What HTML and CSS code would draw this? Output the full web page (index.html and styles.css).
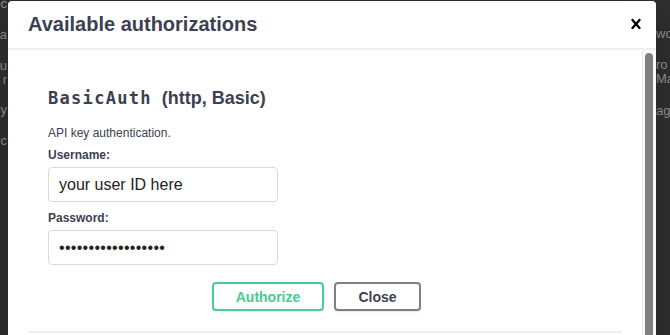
FILE: index.html
```html
<!DOCTYPE html>
<html lang="en">
<head>
<meta charset="utf-8">
<title>Available authorizations</title>
<link rel="stylesheet" href="styles.css">
</head>
<body>
<div class="backdrop">
  <div class="bg-col bg-left">
    <div class="bg-line l1">oc</div>
    <div class="bg-line l2">a</div>
    <div class="bg-line l3">u</div>
    <div class="bg-line">r</div>
    <div class="bg-line l5">y</div>
    <div class="bg-line l6">c</div>
  </div>
  <div class="bg-col bg-right">
    <div class="bg-line r1">wo</div>
    <div class="bg-line r2">ro</div>
    <div class="bg-line">Ma</div>
    <div class="bg-line r4">ag</div>
  </div>
</div>

<div class="modal">
  <div class="modal-header">
    <h3 class="modal-title">Available authorizations</h3>
    <button class="close-modal" type="button" aria-label="Close">
      <svg width="20" height="20" viewBox="0 0 20 20" aria-hidden="true"><path d="M14.348 14.849c-.469.469-1.229.469-1.697 0L10 11.819l-2.651 3.029c-.469.469-1.229.469-1.697 0-.469-.469-.469-1.229 0-1.697l2.758-3.15-2.759-3.152c-.469-.469-.469-1.228 0-1.697.469-.469 1.228-.469 1.697 0L10 8.183l2.651-3.031c.469-.469 1.228-.469 1.697 0 .469.469.469 1.229 0 1.697l-2.758 3.152 2.758 3.15c.469.469.469 1.229 0 1.698z"/></svg>
    </button>
  </div>
  <div class="modal-body">
    <div class="modal-content">
      <div class="auth-container">
        <h4 class="auth-title"><code class="scheme">BasicAuth</code><span class="scheme-type">(http, Basic)</span></h4>
        <p class="desc">API key authentication.</p>
        <label class="field-label" for="user">Username:</label>
        <input class="field" id="user" type="text" value="your user ID here">
        <label class="field-label" for="pass">Password:</label>
        <input class="field field-last field-secret" id="pass" type="password" value="abcdefghijklmnopqr">
        <div class="auth-btn-wrapper">
          <button class="btn authorize" type="button">Authorize</button>
          <button class="btn done" type="button">Close</button>
        </div>
      </div>
    </div>
    <div class="scroll-track" aria-hidden="true">
      <div class="scroll-thumb"></div>
    </div>
  </div>
</div>
</body>
</html>
```

FILE: styles.css
```css
html, body {
  margin: 0;
  padding: 0;
  height: 335px;
  overflow: hidden;
}

body {
  background: #2e2e2e;
  font-family: "Liberation Sans", Arial, sans-serif;
  position: relative;
}

/* page content seen through the backdrop */
.backdrop {
  display: flex;
  justify-content: space-between;
  height: 335px;
}

.bg-col {
  overflow: hidden;
  white-space: nowrap;
  font-size: 13px;
  line-height: 14px;
  color: #8e8e8e;
}

.bg-left {
  width: 7px;
  direction: rtl;
  text-align: right;
}

.bg-right {
  width: 14px;
}

.l1 { margin-top: -3px; }
.l2 { margin-top: 17px; }
.l3 { margin-top: 17px; }
.l5 { margin-top: 16px; }
.l6 { margin-top: 17px; }

.r1 { margin-top: 27px; }
.r2 { margin-top: 17px; }
.r4 { margin-top: 18px; }

/* modal */
.modal {
  position: absolute;
  left: 8px;
  top: 1px;
  width: 648px;
  background: #fff;
  border-radius: 4px;
  box-shadow: 0 10px 30px 0 rgba(0, 0, 0, 0.2);
  color: #3b4151;
}

.modal-header {
  display: flex;
  align-items: center;
  padding: 12px 0;
  border-bottom: 2px solid #efefef;
}

.modal-title {
  flex: 1;
  margin: 0;
  padding: 0 20px;
  font-size: 20px;
  font-weight: 700;
  line-height: 23px;
  color: #3b4151;
}

.close-modal {
  display: flex;
  padding: 0 10px;
  margin: 0;
  border: none;
  background: none;
  cursor: pointer;
  position: relative;
  top: -1px;
}

.close-modal svg {
  fill: #000;
}

.modal-body {
  display: flex;
  height: 480px;
}

.modal-content {
  flex: 1;
  min-width: 0;
  padding: 20px;
  overflow: hidden;
}

.scroll-track {
  box-sizing: border-box;
  width: 14px;
  padding: 3px 3px 3px 2px;
  border-left: 1px solid #e6e6e6;
  background: #fafafa;
}

.scroll-thumb {
  height: 420px;
  border-radius: 4px;
  background: #808080;
}

.auth-container {
  padding: 10px 20px;
  border-bottom: 2px solid #efefef;
}

.auth-title {
  display: flex;
  align-items: baseline;
  margin: 8px 0 17px;
  font-size: 18px;
  line-height: 21px;
  font-weight: 700;
}

.scheme {
  font-family: "DejaVu Sans Mono", "Liberation Mono", monospace;
  font-size: 17px;
  font-weight: 700;
  letter-spacing: 1.3px;
  margin-right: 10px;
}

.scheme-type {
  font-size: 18px;
}

.desc {
  margin: 0 0 8px;
  font-size: 12px;
  line-height: 14px;
}

.field-label {
  display: block;
  margin: 0 0 5px;
  font-size: 12px;
  line-height: 14px;
  font-weight: 700;
}

.field {
  display: block;
  box-sizing: border-box;
  width: 230px;
  height: 35px;
  margin: 0 0 9px;
  padding: 8px 10px;
  border: 1px solid #d9d9d9;
  border-radius: 4px;
  background: #fff;
  font-family: "Liberation Sans", Arial, sans-serif;
  font-size: 16px;
  color: #222;
  outline: none;
}

.field-secret {
  letter-spacing: 0.3px;
}

.field-last {
  margin-bottom: 7px;
}

.auth-btn-wrapper {
  display: flex;
  justify-content: center;
  gap: 10px;
  padding: 10px 0;
}

.btn {
  box-sizing: border-box;
  height: 29px;
  padding: 0;
  border: 2px solid #808080;
  border-radius: 4px;
  background: transparent;
  box-shadow: 0 1px 2px rgba(0, 0, 0, 0.1);
  font-family: "Liberation Sans", Arial, sans-serif;
  font-size: 14px;
  font-weight: 700;
  color: #3b4151;
  cursor: pointer;
}

.btn.authorize {
  width: 112px;
  border-color: #49cc90;
  color: #49cc90;
}

.btn.done {
  width: 87px;
  margin-right: 17px;
}
```
